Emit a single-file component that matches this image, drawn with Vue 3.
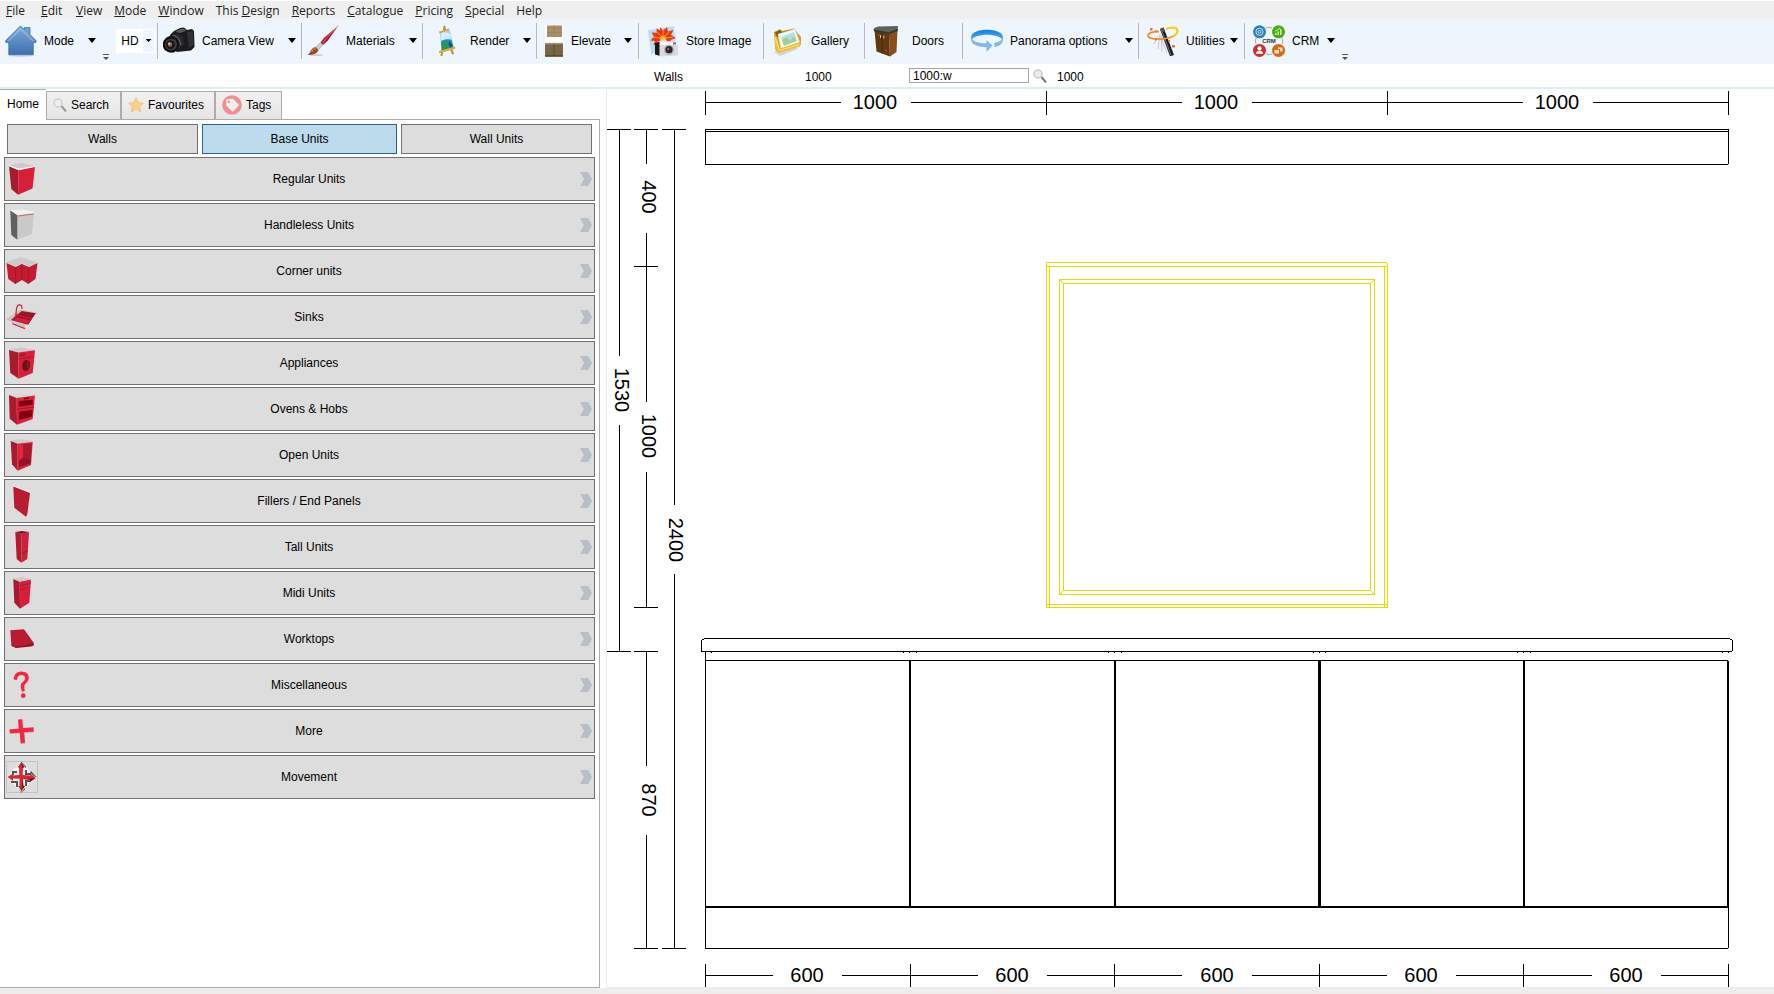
<script setup>
import { ref } from 'vue'

const menus = [
  ['', 'F', 'ile'], ['', 'E', 'dit'], ['', 'V', 'iew'], ['', 'M', 'ode'], ['', 'W', 'indow'],
  ['This ', 'D', 'esign'], ['', 'R', 'eports'], ['', 'C', 'atalogue'], ['', 'P', 'ricing'],
  ['', 'S', 'pecial'], ['Help', '', ''],
]

const tools = [
  { id: 'camera', label: 'Camera View', caret: true },
  { id: 'brush', label: 'Materials', caret: true },
  { id: 'easel', label: 'Render', caret: true },
  { id: 'elevate', label: 'Elevate', caret: true },
  { id: 'store', label: 'Store Image' },
  { id: 'gallery', label: 'Gallery' },
  { id: 'doors', label: 'Doors' },
  { id: 'panorama', label: 'Panorama options', caret: true },
  { id: 'wand', label: 'Utilities', caret: true },
]

const groups = ['Walls', 'Base Units', 'Wall Units']
const activeGroup = ref('Base Units')
const command = ref('1000:w')

const R = '#d81e38'
const D = '#a81a2e'
const G = '#cbcbcb'
const units = [
  { label: 'Regular Units', shapes: [
    [G, 'M3 2.3 16 0 29 3 12.7 6.7Z'], [D, 'M3 3 12.7 7 12 31.7 5.3 26Z'], [R, 'M12.7 7 29 3.6 26.5 25.6 12 31.7Z'], ['#f6f6f6', 'M3 2.3 12.7 5.6 29 3V4L12.7 7.2 3 3.3Z'],
  ] },
  { label: 'Handleless Units', shapes: [
    ['#c9c9c9', 'M11.3 6 28 4 26 25 11.3 30.7Z'], ['#606060', 'M4.3 1.6 11.3 6V30.7L5.3 26Z'], ['#f2f2f2', 'M4.3 1.3 16 .5 28.3 2.7V4L11.3 6Z'], ['#d0685c', 'M12 6.4 27.5 4.4V5.4L12 7.4Z'],
  ] },
  { label: 'Corner units', shapes: [
    ['#c31c32', 'M.5 8 9.7 12 15.7 9 23 12 31.5 8 29.5 24 22.3 29 16 25 9.3 29 2.3 24Z'], ['#9e1729', 'M9.2 12H10.2L9.8 28.5H9ZM15.3 9H16.3V25H15.3ZM22.5 12H23.3L22.5 28.5H21.9Z'], [G, 'M0 7.3 15 2.3 31.7 7.3 23 11.7 15.7 8.3 9.7 11.7Z'],
  ] },
  { label: 'Sinks', shapes: [
    ['#c6c6c6', 'M0 18.3 14 8.3 31.7 11.7 21.3 27.3 18 27Z'], ['#ececec', 'M0 18.3 18 26 31.7 11.7 21.3 27.3Z'], ['#9a1526', 'M5 19 15.7 10 29.7 12.3 22.3 23.7Z'], [R, 'M7 19.3 10.5 16.3 24.8 19.6 22 23ZM12.2 15 12.9 14.2 26 17 25.5 18Z'],
    [R, 'M9 15.5 10 7Q11 2.8 14 3.2 17.2 4 16.4 8H15.3Q15.8 4.7 13.6 4.5 11.6 4.4 11.2 7.2L10.6 12.5 13 14V15H8ZM6.3 22 19 27V28.2L6.3 23.2Z'],
  ] },
  { label: 'Appliances', shapes: [
    [G, 'M3 2.3 16 .5 29 3 12.7 5.5Z'], [D, 'M3 3 12.3 5.5 12.7 31.7 4.3 26Z'], [R, 'M12.3 5.5 29 3.2 26.7 26 12.7 31.7Z'], ['#b2182d', 'M12.3 11.6 28.2 9V10L12.3 12.6ZM14 7 19 6.3V9L14 9.8Z'], ['#691018', 'M20 13C26 12.5 25 23.5 19.5 24 14.5 23.8 15.5 13.5 20 13Z'], ['#8f2029', 'M20.5 14.5C23.5 15 23.2 20.5 21 22Z'],
  ] },
  { label: 'Ovens & Hobs', shapes: [
    ['#d7d7d7', 'M3 1 10 .3 29 1.7V2.8L10.7 5.7Z'], [D, 'M3 2 10.7 5 11 31.7 3.7 25.7Z'], ['#e21f3b', 'M10.7 5 29 2.5 26.7 26 11 31.7Z'], ['#7d0013', 'M12.7 8 27 6.7 26.7 11.7 13 13.7ZM13 18.7 26.7 16.7 25.7 23.7 13 27ZM18 4.9 23 4.2V5.7L18 6.4Z'], ['#a61629', 'M11 15.8 27.9 13.4V14.4L11 16.9Z'],
  ] },
  { label: 'Open Units', shapes: [
    [G, 'M4.7 1.2 15 .2 26.7 2V3.3L11.7 5Z'], [D, 'M4.7 2 11.7 4.7V31.7L6 25.3Z'], [R, 'M11.7 4.7 26.7 3 25 26 11.7 31.7Z'], ['#a8192d', 'M13 5.7 25.7 4.2 24.4 24.6 13 28Z'], ['#e12440', 'M13 5.7 17 5.2V19L13 22Z'], ['#8f1524', 'M13 22 17 18.7 24.7 20.5 24.4 24.6 13 28Z'],
  ] },
  { label: 'Fillers / End Panels', shapes: [
    ['#f3f3f3', 'M7.3.3 24 7V8.4L7.3 1.6Z'], ['#b71c30', 'M7.3 1.4 24 8 21.3 29 20 31.7 8.3 22.7Z'],
  ] },
  { label: 'Tall Units', shapes: [
    ['#b21b2f', 'M9.3 1 15.7 3 15.3 31.7 10.7 28Z'], ['#cf2038', 'M15.7 3 23 1 21.3 28 15.3 31.7Z'], ['#7e1522', 'M9.3.9 16 0 23 .9 15.7 3Z'], ['#9b182a', 'M15.3 22 21.7 19.6V20.4L15.3 22.8Z'],
  ] },
  { label: 'Midi Units', shapes: [
    [D, 'M7.3 2 13.7 4.7 14 31.7 8.3 25.7Z'], [R, 'M13.7 4.7 25 2.4 23.3 25.7 14 31.7Z'], [G, 'M7.3 1.7 16 0 24.9 2 13.7 4.5Z'], ['#b01a2e', 'M13.9 8.6 24.4 6V6.8L13.9 9.4ZM13.9 12.2 24.2 9.4V10.2L13.9 13Z'],
  ] },
  { label: 'Worktops', shapes: [
    ['#b91b30', 'M4.3 7.3 18 6.3 27.7 19.8 26.9 22.5 10 24.5 5.3 21.7Z'], ['#8f1524', 'M5.3 21.5 10 24 27.7 20V22.5L25 23.5 10 24.9 5.5 22.9Z'],
  ] },
  { label: 'Miscellaneous', shapes: [
    ['#fb2340', 'M7.6 10.6Q8 2.4 15.3 2.4 22.6 2.4 22.8 8.8 22.8 12.3 18.9 15.2 17.9 16.3 18.8 22L16 22.8Q13.8 16.6 15.4 14.3 19.4 11.4 19.2 8.8 18.6 5.9 15.3 6 11.4 6.2 10.8 11Z'], ['#fb2340', 'M17.3 24.2A2.4 2.4 0 1 1 17.2 24.2Z'],
  ] },
  { label: 'More', shapes: [
    ['#b9a0a4', 'M4 18.9 13.8 18 15 28.9 19.2 28.2 18.6 17.8 28 17.2 27.7 15Z'], ['#fb2340', 'M12 4.6 16.3 4.3 17 13 27.5 12.3 27.7 16.6 17.9 17.2 19 27.6 14.7 28.2 13.7 17.8 4 18.6 3.3 14.4 12.7 13.5Z'],
  ] },
  { label: 'Movement', shapes: [
    ['#c3c3c3', 'M0 0H32V32H0ZM1 1V31H31V1Z'], ['#f4f4f4', 'M15 1 30 16 15 31 1 16Z'],
    ['#555', 'M15 .5 20 5.5V7L15 2ZM25 10 30.5 16H29L24 11.5ZM6 10H11V12H8V14H6ZM19 9H21V12H25V14H19ZM5 20H12V26H10V22H5ZM19 19H25V21H21V25H19ZM12 27 15 31 19 27V28.5L15 31.8Z'],
    ['#dd2630', 'M15 1.5 18.5 6.5H17L16.6 14 24.5 14.6V12.5L29.5 17 24.5 20.5V18.8L17 18 17.4 25H19L15.3 30 12 25H13.4L13.6 17.8 7 17.6V20L1.5 16 7 12.5V14.5L13.4 14 13 6.5H11.5Z'],
    ['#7e1018', 'M16.4 18 17.4 25H19L15.3 30 16 25ZM24.5 18.8 17 18 29.5 17 24.5 20.5ZM15 1.5 18.5 6.5H16Z'],
  ] },
]

// Elevation drawing, in canvas units: every stroke is a filled bar [x, y, w, h].
const h = (x1, x2, y, t = 1) => [x1, y, x2 - x1, t]
const v = (x, y1, y2, t = 1) => [x, y1, t, y2 - y1]

const black = [
  // top dimension chain
  ...[705, 1046, 1387, 1728].map((x) => v(x, 91, 115)),
  h(705, 841, 102), h(911, 1182, 102), h(1252, 1523, 102), h(1593, 1729, 102),
  // cornice
  h(705, 1729, 129), h(705, 1729, 131), h(705, 1728, 164), v(705, 129, 165), v(1728, 129, 164),
  // 1530 height
  h(607, 631, 129), v(619, 129, 356), v(619, 425, 652), h(607, 631, 651),
  // 400 / 1000 / 870 heights
  ...[129, 266, 607, 651, 948].map((y) => h(634, 658, y)),
  v(646, 129, 164), v(646, 233, 402), v(646, 472, 607), v(646, 651, 766), v(646, 835, 948),
  // 2400 height
  h(662, 686, 129), v(674, 129, 505), v(674, 574, 948), h(662, 686, 948),
  // worktop
  h(704, 1730, 638), h(702, 704, 639), h(1730, 1732, 639), v(701, 640, 652), v(1732, 640, 651), h(701, 1732, 651),
  ...[711, 903, 909, 916, 1108, 1114, 1121, 1313, 1319, 1325, 1517, 1523, 1530, 1722, 1728].map((x) => v(x, 652, 653)),
  // base units
  h(705, 1728, 660), v(705, 652, 949), v(909, 661, 907, 2), v(1114, 661, 907, 2), v(1318, 661, 907, 3),
  v(1523, 661, 907, 2), v(1727, 661, 908, 2), h(705, 1729, 906, 2), v(1728, 907, 948), h(705, 1728, 948),
  // bottom dimension chain
  ...[705, 910, 1114, 1319, 1523, 1728].map((x) => v(x, 964, 987)),
  h(705, 773, 975), h(842, 978, 975), h(1047, 1182, 975), h(1252, 1387, 975), h(1456, 1592, 975), h(1661, 1728, 975),
]

const yellow = [
  h(1046, 1387, 262), h(1046, 1388, 266), h(1046, 1388, 604), h(1046, 1388, 607),
  v(1046, 262, 608), v(1049, 266, 608), v(1384, 266, 608), v(1387, 263, 608),
  h(1059, 1375, 279), h(1063, 1371, 283), h(1063, 1371, 590), h(1059, 1375, 594),
  v(1059, 279, 595), v(1063, 283, 591), v(1370, 283, 591), v(1374, 279, 595),
  ...[1, 2, 3].flatMap((i) => [[1059 + i, 279 + i, 1, 1], [1374 - i, 279 + i, 1, 1], [1059 + i, 594 - i, 1, 1], [1374 - i, 594 - i, 1, 1]]),
]

const across = [
  [875, 109, '1000'], [1216, 109, '1000'], [1557, 109, '1000'],
  [807, 982, '600'], [1012, 982, '600'], [1217, 982, '600'], [1421, 982, '600'], [1626, 982, '600'],
]
const down = [[615, 390, '1530'], [642, 197, '400'], [642, 436, '1000'], [642, 800, '870'], [669, 540, '2400']]
</script>

<template>
  <div class="app">
    <nav class="menubar" aria-label="Main menu">
      <button v-for="m in menus" :key="m.join('')" type="button">{{ m[0] }}<u v-if="m[1]">{{ m[1] }}</u>{{ m[2] }}</button>
    </nav>

    <div class="toolbar" role="toolbar" aria-label="Tools">
      <div class="group">
        <button type="button" class="tool mode">
          <span class="icon">
            <svg viewBox="0 0 32 32" aria-hidden="true">
              <defs><linearGradient id="roof" x1="0" y1="0" x2="0" y2="1"><stop offset="0" stop-color="#7fa9da" /><stop offset="1" stop-color="#3d6fb0" /></linearGradient></defs>
              <ellipse cx="16" cy="30.5" rx="13" ry="1.2" fill="#b9cbe2" />
              <path d="M15.5 1 19.5 4.6V2.6H25V9.6L31 15.6V17.4H28.3V29.6H3.8V17.4H.7V15.6Z" fill="url(#roof)" stroke="#3f6ca6" stroke-width=".8" />
              <path d="M15.5 2.2 29.8 16.3H27.4L15.6 5.2 4 16.3H2Z" fill="#a9c7ea" opacity=".5" />
            </svg>
          </span>
          <span>Mode</span>
          <i class="caret"></i>
        </button>
        <i class="overflow"></i>
        <button type="button" class="hd"><span>HD</span><b><i class="caret small"></i></b></button>
      </div>

      <button v-for="t in tools" :key="t.id" type="button" class="tool" :class="t.id">
        <span class="icon">
          <svg v-if="t.id === 'camera'" viewBox="0 0 32 32" aria-hidden="true">
            <path d="M11 6 17 3 21 2.4 24 5 29 4 31 6 31.5 22 28 25.5 14 27 8 22 7 10Z" fill="#1b1b1d" />
            <path d="M12 7 17 4 21 3.5 23 6 17 8Z" fill="#55585c" /><path d="M24 7 30 6 30.5 20 26 23Z" fill="#333" />
            <path d="M3 13 12 8.5 20 11 21 20 10 28Z" fill="#29292b" />
            <circle cx="8" cy="19.5" r="8.2" fill="#101012" /><circle cx="8" cy="19.5" r="6" fill="#3d3b3c" />
            <circle cx="7.6" cy="19.8" r="4.2" fill="#17141a" /><circle cx="7" cy="19.5" r="2.2" fill="#9c6a4f" /><circle cx="6.2" cy="18.5" r=".9" fill="#e6d9d0" />
            <path d="M10 10.5Q17 11 17.5 20" fill="none" stroke="#6a6a6e" />
          </svg>
          <svg v-else-if="t.id === 'brush'" viewBox="0 0 32 32" aria-hidden="true">
            <ellipse cx="9" cy="30" rx="7" ry="1" fill="#c9d0da" />
            <path d="M31.4.4 20.5 16 16 20 13.4 17.6 17.5 12.5Z" fill="#b3122c" /><path d="M31.4.4 19 13.6 15.5 18.2" fill="none" stroke="#e88b96" stroke-width=".8" />
            <path d="M13.4 17.6 16 20 11 25 8.6 22.3Z" fill="#c9cdd2" stroke="#888" stroke-width=".4" />
            <path d="M8.6 22 11.4 25Q10.5 30 .6 30 3 28.5 3.8 25.4 5.6 22.4 8.6 22Z" fill="#9a4a25" /><path d="M4.5 27Q6 23.5 8.6 23.4" fill="none" stroke="#d58a5c" />
          </svg>
          <svg v-else-if="t.id === 'easel'" viewBox="0 0 32 32" aria-hidden="true">
            <path d="M12.5.8 14 .5 16 7 23 29 21 29.5 12 5ZM11 22 13 23 11.4 31 9.4 31Z" fill="#d08a2c" />
            <path d="M8.5 6.2 19 5.5 23 23.5 11 27.5Z" fill="#9fd5f4" /><path d="M10 8.5Q14 6 19.2 9L20 13 10 16Z" fill="#d8effb" />
            <path d="M10 16Q15 13 20.6 15L22.6 23 11 26.6Z" fill="#2388d8" /><path d="M10.3 18.5 15 16 17.6 25 11 27Z" fill="#239a44" /><path d="M18 16 21.5 20 20 23.5 17.5 20Z" fill="#0e5f3a" />
            <path d="M7.8 26 24 21.5 24.6 23.5 8.4 28.3ZM8 6.5 18 3.5 18.5 5.2 8.4 8.2Z" fill="#e1a546" />
          </svg>
          <svg v-else-if="t.id === 'elevate'" viewBox="0 0 18 32" aria-hidden="true">
            <path d="M0 0H18V32H0Z" fill="#fff" /><path d="M2 .5H17V12H2Z" fill="#aa8e66" /><path d="M9.3.5V12M2 3.4H17M2 7.5H17" stroke="#947a55" stroke-width=".5" />
            <path d="M0 18H18V32H0Z" fill="#7b6547" /><path d="M0 17.8H18V19.3H0Z" fill="#a99579" /><path d="M9 19V31M0 30.5H18" stroke="#584731" stroke-width=".8" />
          </svg>
          <svg v-else-if="t.id === 'store'" viewBox="0 0 32 32" aria-hidden="true">
            <path d="M.7 5 27 1 29 16 4 30Z" fill="#b5dcf6" stroke="#e9eef3" />
            <path d="M13 2 16 5.5 20 2 21 6.5 26.5 5 24 9.8 28.8 13 23.5 15 24 20H6.5L8 16 3.4 15.5 7 11.8 4.6 7.6 9.8 7.8 9.5 3.2 13.2 5.4Z" fill="#ee3a0a" />
            <path d="M16 5V10M10 7 14 11M22 7 18 11M6 12 13 13M26 12 19 13" stroke="#ff9240" /><circle cx="16" cy="13.5" r="3" fill="#f3b616" />
            <path d="M8 17.5 13 16 14 14.5H19L20 16 31 17V30.5L15 31.5 8 29.5Z" fill="#d9dbde" /><path d="M8 17.5 12.5 17V30.8L8 29.5Z" fill="#17181a" /><path d="M13 17 31 17.5V20H13Z" fill="#f8f8f8" />
            <circle cx="22" cy="24.7" r="5.2" fill="#b5b8bd" /><circle cx="22" cy="24.7" r="3.6" fill="#24262c" /><circle cx="21.2" cy="24" r="1.3" fill="#b44a55" /><path d="M26 17.5H29V19.5H26Z" fill="#6a6d71" />
          </svg>
          <svg v-else-if="t.id === 'gallery'" viewBox="0 0 32 32" aria-hidden="true">
            <path d="M2 27 8 31 26 24 22 21Z" fill="#cfd6e0" /><path d="M2 7 8 4 10 6 22 3.5 29 12V20L7 27 3.5 25Z" fill="#d79a1c" /><path d="M3 7.5 8 5 10 7 19 5 20 9 5 12Z" fill="#7f5a19" />
            <path d="M6 9 23 4 28 18 9 24Z" fill="#eef7f2" stroke="#c7dcd9" stroke-width=".5" /><path d="M9 12 22 7 25 16 12 21Z" fill="#b4dfe6" /><path d="M10 15 15 12 18 16 22 11 24.5 16 12 20.5Z" fill="#a2cd93" />
            <path d="M2 11 5 12 8 23.5 29 16.5 28 21.5 7 28 4 26Z" fill="#f2bd35" /><path d="M3 12 7.5 25.5 27 19.5" fill="none" stroke="#ffe28c" />
          </svg>
          <svg v-else-if="t.id === 'doors'" viewBox="0 0 32 32" aria-hidden="true">
            <path d="M1.5 5 16 9 17 31.5 3.5 26.5Z" fill="#633711" /><path d="M15.8 8.5 24.5 5 23.5 27 17 31.5Z" fill="#8a4f19" />
            <path d="M.8 3.2 5 1.5 25 1 24.5 5.4 16 7.8.8 5.6Z" fill="#5d6358" /><path d="M.8 4.6 15.8 7.3 24.8 4V6L16 9.3 1 6.3Z" fill="#34382f" />
            <path d="M9 8.5V28.5" stroke="#432407" stroke-width=".8" /><path d="M7.5 10V13M10.8 10.5V13.5" stroke="#e0d3bd" stroke-width=".9" /><path d="M5 10 7 10.5M12 25 14 26" stroke="#97622b" />
          </svg>
          <svg v-else-if="t.id === 'panorama'" viewBox="0 0 32 32" aria-hidden="true">
            <defs><linearGradient id="arc" x1="0" y1="0" x2="0" y2="1"><stop offset="0" stop-color="#0d80ea" /><stop offset="1" stop-color="#5bb6fa" /></linearGradient></defs>
            <path d="M0 12.5C0 2.2 32 2.2 32 12.5V16C30 7.5 2 7.5 0 16Z" fill="url(#arc)" />
            <path d="M0 14C0 20 7 22 15.5 22.3V27L21.5 20.5 15.5 15V18.3C8 18 2.5 17 0 12.5ZM32 12.5C30.5 16 27.5 17.3 23 18L23.5 22C29 21 32 18.5 32 14.5Z" fill="#82b8ee" />
          </svg>
          <svg v-else viewBox="0 0 32 32" aria-hidden="true">
            <path d="M13 9 11 24M14 10 15 27M14 12 20 28M11 11 7 19" stroke="#c8c8cb" stroke-width="1" />
            <path d="M13 4 16.5 2.5 27 30 23 31.3Z" fill="#1d1d1f" /><path d="M14.2 4 24 30" stroke="#777" /><path d="M13 4 16.5 2.5 18 6.3 14.4 7.6Z" fill="#555" />
            <path d="M19 4Q30 .5 30.5 6 30 12.5 15 14 1 14.6 1 10.5 1 7 12 6.5" fill="none" stroke="#f09026" stroke-width="1.8" /><path d="M19 4Q30 .5 30.5 6 30.3 9 26 11" fill="none" stroke="#fbd713" stroke-width="1.8" />
            <path d="M3 3H5.5V5.5H3ZM8 13H10V15.5H8ZM25 20H28V22.5H25ZM21 15H23V17H21ZM8 5H9.5V7H8Z" fill="#ee7248" />
          </svg>
        </span>
        <span>{{ t.label }}</span>
        <i v-if="t.caret" class="caret"></i>
      </button>

      <div class="group">
        <button type="button" class="tool crm">
          <span class="icon">
            <svg viewBox="0 0 32 32" aria-hidden="true">
              <path d="M13 3Q16 1.5 19 3M13 29Q16 30.5 19 29M3 13Q1.5 16 3 19M29 13Q30.5 16 29 19" fill="none" stroke="#a9abad" />
              <circle cx="6.5" cy="6.8" r="6.5" fill="#2f7fbd" /><circle cx="25.5" cy="6.8" r="6.5" fill="#4bab10" /><circle cx="6.5" cy="25.4" r="6.5" fill="#cf2f28" /><circle cx="25.5" cy="25.4" r="6.5" fill="#dd670c" />
              <g fill="none" stroke="#cfe3f2" stroke-width=".9"><circle cx="6.5" cy="6.8" r="3.6" /><circle cx="6.5" cy="6.8" r="1.5" /></g>
              <path d="M22 10V8H23.5V10ZM24.5 10V6.5H26V10ZM27 10V4H28.5V10ZM22 6 27 2.7 27.4 3.4 22.4 6.8Z" fill="#d6f0c6" />
              <circle cx="6.5" cy="23.3" r="2.1" fill="#fff" /><path d="M2.8 28.8Q3.5 25.6 6.5 25.6 9.5 25.6 10.2 28.8Z" fill="#fff" />
              <path d="M21.5 25H26V28.5H21.5ZM25 22.5H29.5V26.5H27V24H25Z" fill="#fde5d2" />
              <text x="16" y="18" text-anchor="middle" class="crm-mark">CRM</text>
            </svg>
          </span>
          <span>CRM</span>
          <i class="caret"></i>
        </button>
        <i class="overflow"></i>
      </div>
    </div>

    <div class="inforow">
      <label for="command">Walls</label>
      <span>1000</span>
      <input id="command" v-model="command" type="text" />
      <button type="button" class="find" aria-label="Find">
        <svg viewBox="0 0 14 14" aria-hidden="true"><path d="M8.4 8 13 13.4" stroke="#777" stroke-width="2" /><circle cx="5" cy="5" r="4" fill="#e9ecef" stroke="#c4c7ca" stroke-width="1.4" /></svg>
      </button>
      <span>1000</span>
    </div>

    <main class="work">
      <aside class="side">
        <div class="tabs" role="tablist">
          <button type="button" role="tab" class="tab home" aria-selected="true">Home</button>
          <button type="button" role="tab" class="tab search" aria-selected="false">
            <svg viewBox="0 0 14 14" width="14" height="14" aria-hidden="true"><path d="M8.4 8 13 13.4" stroke="#999" stroke-width="2" /><circle cx="5" cy="5" r="4" fill="#efefef" stroke="#cdcdcd" stroke-width="1.4" /></svg>
            Search
          </button>
          <button type="button" role="tab" class="tab favourites" aria-selected="false">
            <svg viewBox="0 0 16 16" width="16" height="16" aria-hidden="true"><path d="M8 .8 10.3 5.4 15.5 6.1 11.8 9.8 12.7 15 8 12.6 3.3 15 4.2 9.8.5 6.1 5.7 5.4Z" fill="#f8cf8c" stroke="#f0bd78" stroke-width=".7" /></svg>
            Favourites
          </button>
          <button type="button" role="tab" class="tab tags" aria-selected="false">
            <svg viewBox="0 0 20 20" width="20" height="20" aria-hidden="true"><circle cx="10" cy="10" r="9.8" fill="#ee9090" /><path d="M4 5.5 5.5 4 11 3.7 17.2 10 10.8 17 4.4 10.8Z" fill="#f3ecec" /><circle cx="6.8" cy="6.8" r="1.2" fill="#ee9090" /></svg>
            Tags
          </button>
        </div>
        <div class="panel">
          <div class="groups">
            <button v-for="g in groups" :key="g" type="button" :class="{ active: g === activeGroup }" @click="activeGroup = g">{{ g }}</button>
          </div>
          <ul class="units">
            <li v-for="u in units" :key="u.label">
              <button type="button">
                <svg viewBox="0 0 32 32" width="32" height="32" aria-hidden="true"><path v-for="(s, i) in u.shapes" :key="i" :fill="s[0]" :d="s[1]" fill-rule="evenodd" /></svg>
                <span>{{ u.label }}</span>
                <svg viewBox="0 0 12 14" width="12" height="14" aria-hidden="true"><path d="M0 0H8L12 7 8 14H0L4 7Z" fill="#b8bfc8" /></svg>
              </button>
            </li>
          </ul>
        </div>
      </aside>

      <section class="canvas" aria-label="Elevation">
        <svg viewBox="607 89 1167 898" preserveAspectRatio="xMinYMin meet">
          <g shape-rendering="crispEdges">
            <rect v-for="(r, i) in yellow" :key="'y' + i" :x="r[0]" :y="r[1]" :width="r[2]" :height="r[3]" fill="#e0e000" />
            <rect v-for="(r, i) in black" :key="'b' + i" :x="r[0]" :y="r[1]" :width="r[2]" :height="r[3]" />
          </g>
          <text v-for="(t, i) in across" :key="'a' + i" class="dim" :x="t[0]" :y="t[1]">{{ t[2] }}</text>
          <text v-for="(t, i) in down" :key="'d' + i" class="dim" :transform="`translate(${t[0]} ${t[1]}) rotate(90)`">{{ t[2] }}</text>
        </svg>
      </section>
    </main>
    <footer class="status"></footer>
  </div>
</template>

<style>
body {
  background: #fff;
}
</style>

<style scoped>
.app {
  display: flex;
  flex-direction: column;
  height: 100vh;
  box-sizing: border-box;
  padding-top: 1px;
  background: #fff;
  color: #000;
  font: 12px/16px "Liberation Sans", Arial, sans-serif;
}
button {
  margin: 0;
  padding: 0;
  border: 0;
  background: none;
  color: inherit;
  font: inherit;
  white-space: nowrap;
}
svg {
  display: block;
}
.menubar {
  display: flex;
  gap: 12px;
  flex: none;
  height: 18px;
  padding-left: 6px;
  background: #efefef;
  color: #222;
  font: 12px/20px "Open Sans", "Noto Sans", sans-serif;
}
.menubar button {
  min-width: 23px;
  text-align: left;
}
.toolbar {
  display: grid;
  grid-template-columns: 158px 144px 121px 114px 102px 125px 101px 98px 176px 106px 1fr;
  flex: none;
  height: 45px;
  background: #eef5fd;
}
.group {
  display: flex;
  align-items: center;
}
.toolbar > * {
  position: relative;
}
.toolbar > :not(:last-child)::after {
  content: "";
  position: absolute;
  right: 0;
  top: 4px;
  bottom: 5px;
  width: 1px;
  background: #b4b9c0;
}
.tool {
  display: flex;
  align-items: center;
  height: 100%;
  padding: 0 6px 2px 8px;
  box-sizing: border-box;
}
.tool .icon {
  display: flex;
  width: 32px;
  height: 32px;
  margin-right: 7px;
}
.tool .icon svg {
  width: 100%;
  height: 100%;
}
.tool.mode,
.tool.camera,
.tool.brush {
  padding-left: 5px;
}
.tool.elevate {
  padding-left: 4px;
  padding-right: 7px;
}
.tool.wand {
  padding-right: 7px;
}
.tool.elevate .icon {
  width: 26px;
  margin-right: 4px;
}
.tool.mode {
  width: 102px;
}
.tool.crm {
  width: 96px;
}
.caret {
  width: 8px;
  height: 5px;
  margin-left: auto;
  background: #000;
  clip-path: polygon(0 0, 100% 0, 50% 100%);
}
.caret.small {
  width: 6px;
  height: 3px;
  margin: auto;
}
.overflow {
  align-self: flex-end;
  width: 6px;
  height: 6px;
  margin: 0 7px 4px 1px;
  background: #555;
  clip-path: polygon(0 0, 6px 0, 6px 1px, 0 1px, 0 3px, 6px 3px, 3px 6px, 0 3px);
}
.hd {
  display: flex;
  width: 39px;
  height: 24px;
  padding: 1px;
  box-sizing: border-box;
  background: #fff;
  margin-bottom: 2px;
  line-height: 22px;
}
.hd span {
  flex: 1;
  text-align: center;
}
.hd b {
  display: flex;
  width: 11px;
  background: #eef5fd;
}
.crm-mark {
  font: bold 6px "Liberation Sans", Arial, sans-serif;
  fill: #333;
}
.inforow {
  display: grid;
  grid-template-columns: 151px 104px 120px 28px auto;
  justify-content: start;
  align-items: center;
  flex: none;
  height: 23px;
  padding: 2px 0 0 654px;
  box-sizing: border-box;
}
.inforow input {
  width: 120px;
  height: 15px;
  margin-bottom: 2px;
  padding: 0 3px;
  border: 1px solid #a5a5ad;
  box-sizing: border-box;
  background: #fff;
  color: #000;
  font: inherit;
}
.find {
  width: 14px;
  height: 14px;
  margin: 0 0 2px 4px;
}
.work {
  display: flex;
  flex: 1;
  min-height: 0;
  border-top: 2px solid #dff0f5;
}
.side {
  display: flex;
  flex-direction: column;
  flex: none;
  width: 600px;
  margin-right: 6px;
}
.tabs {
  display: flex;
  align-items: flex-end;
  height: 31px;
  flex: none;
}
.tab {
  display: flex;
  align-items: center;
  gap: 4px;
  height: 29px;
  padding: 0 0 2px 6px;
  box-sizing: border-box;
  border: 1px solid #acacac;
  background: linear-gradient(#f1f1f1, #e5e5e5);
}
.tab.home {
  position: relative;
  width: 46px;
  height: 31px;
  padding: 0 0 3px 7px;
  border-width: 1px 0 0;
  background: #fff;
}
.tab.search {
  width: 75px;
}
.tab.favourites {
  width: 94px;
}
.tab.tags {
  width: 67px;
}
.panel {
  flex: 1;
  min-height: 0;
  margin-top: -1px;
  padding: 4px 4px 0;
  border: 1px solid #acacac;
  border-left: 0;
}
.groups {
  display: grid;
  grid-template-columns: 191fr 195fr 191fr;
  gap: 4px;
  padding: 0 3px;
}
.groups button {
  height: 30px;
  border: 1px solid #707070;
  background: #ddd;
}
.groups .active {
  border-color: #2a6290;
  background: #bcdcee;
}
.units {
  display: flex;
  flex-direction: column;
  gap: 2px;
  margin: 3px 0 0;
  padding: 0;
  list-style: none;
}
.units button {
  display: flex;
  align-items: center;
  width: 100%;
  height: 44px;
  padding: 0 2px 0 1px;
  border: 1px solid #707070;
  background: #ddd;
}
.units span {
  flex: 1;
}
.canvas {
  flex: 1;
  min-width: 0;
  border: solid #dff0f5;
  border-width: 0 0 1px 1px;
}
.canvas svg {
  width: 100%;
  height: 100%;
}
.dim {
  font: 20px "Liberation Sans", Arial, sans-serif;
  text-anchor: middle;
}
.status {
  flex: none;
  height: 6px;
  background: #f0ecec;
}
</style>
